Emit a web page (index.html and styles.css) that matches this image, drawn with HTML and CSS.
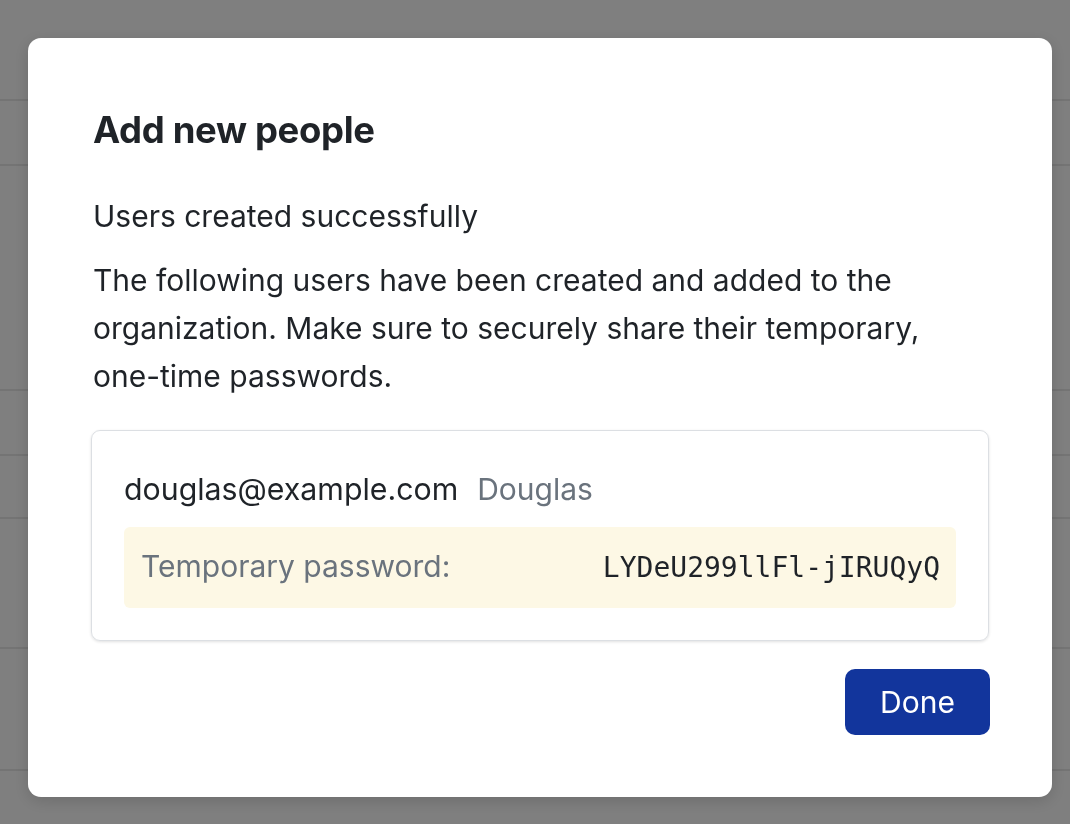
FILE: index.html
```html
<!DOCTYPE html>
<html lang="en">
<head>
<meta charset="utf-8">
<title>Add new people</title>
<link rel="stylesheet" href="styles.css">
</head>
<body>
<div class="page">
  <div class="row r1"></div>
  <div class="row r2"></div>
  <div class="row r3"></div>
  <div class="row r4"></div>
  <div class="row r5"></div>
  <div class="row r6"></div>
  <div class="row r7"></div>
  <div class="row r8"></div>
</div>
<div class="overlay">
  <div class="modal" role="dialog" aria-labelledby="modal-title">
    <h1 class="modal-title" id="modal-title">Add new people</h1>
    <p class="subtitle">Users created successfully</p>
    <p class="desc">The following users have been created and added to the organization. Make sure to securely share their temporary, <span class="nowrap">one-time</span> passwords.</p>
    <div class="user-card">
      <div class="user-line">
        <span class="email">douglas@example.com</span>
        <span class="name">Douglas</span>
      </div>
      <div class="password-row">
        <span class="pw-label">Temporary password:</span>
        <code class="pw-value">LYDeU299llFl-jIRUQyQ</code>
      </div>
    </div>
    <div class="actions">
      <button class="btn-done" type="button">Done</button>
    </div>
  </div>
</div>
</body>
</html>
```

FILE: styles.css
```css
html, body {
  margin: 0;
  padding: 0;
}

body {
  background: #ffffff;
  font-family: Inter, "Noto Sans", "Liberation Sans", sans-serif;
  color: #1f2328;
  width: 1070px;
  height: 824px;
  overflow: hidden;
}

.page {
  display: flex;
  flex-direction: column;
}

.row {
  border-bottom: 2px solid #e8e8e8;
  box-sizing: border-box;
}
.r1 { height: 101px; }
.r2 { height: 65px; }
.r3 { height: 225px; }
.r4 { height: 65px; }
.r5 { height: 63px; }
.r6 { height: 130px; }
.r7 { height: 122px; }
.r8 { height: 60px; border-bottom: none; }

.overlay {
  position: fixed;
  inset: 0;
  background: rgba(0, 0, 0, 0.5);
  display: flex;
  align-items: flex-start;
  padding: 38px 0 0 28px;
}

.modal {
  width: 1024px;
  box-sizing: border-box;
  background: #ffffff;
  border-radius: 13px;
  padding: 70px 63px 62px 63px;
  box-shadow: 0 4px 16px rgba(0, 0, 0, 0.15);
}

.modal-title {
  margin: 0;
  font-size: 36.5px;
  line-height: 44px;
  font-weight: 700;
  letter-spacing: -0.35px;
  color: #1f2328;
  padding-left: 2px;
}

.subtitle {
  margin: 40px 0 0;
  font-size: 30px;
  line-height: 48px;
  padding-left: 2px;
}

.desc {
  margin: 16px 0 0;
  font-size: 30px;
  line-height: 48px;
  padding-left: 2px;
}

.nowrap {
  white-space: nowrap;
}

.user-card {
  margin-top: 30px;
  border: 1px solid #dcdfe3;
  border-radius: 9px;
  padding: 32px;
  box-shadow: 0 1px 3px rgba(0, 0, 0, 0.12);
}

.user-line {
  display: flex;
  align-items: baseline;
  gap: 19px;
  line-height: 52px;
}

.email {
  font-size: 30.3px;
  color: #1f2328;
}

.name {
  font-size: 30px;
  color: #6a737d;
}

.password-row {
  margin-top: 12px;
  background: #fdf8e5;
  border-radius: 6px;
  padding: 15px 16px 16px 17px;
  display: flex;
  justify-content: space-between;
  align-items: baseline;
  line-height: 48px;
}

.pw-label {
  font-size: 30px;
  color: #6a737d;
}

.pw-value {
  font-family: "DejaVu Sans Mono", "Liberation Mono", monospace;
  font-size: 28px;
  color: #1f2328;
}

.actions {
  margin-top: 28px;
  display: flex;
  justify-content: flex-end;
}

.btn-done {
  width: 145px;
  height: 66px;
  border: none;
  border-radius: 10px;
  background: #12359c;
  color: #ffffff;
  font-family: Inter, "Noto Sans", "Liberation Sans", sans-serif;
  font-size: 30px;
  font-weight: 400;
  padding: 0;
  margin-right: -1px;
  cursor: pointer;
}
```
